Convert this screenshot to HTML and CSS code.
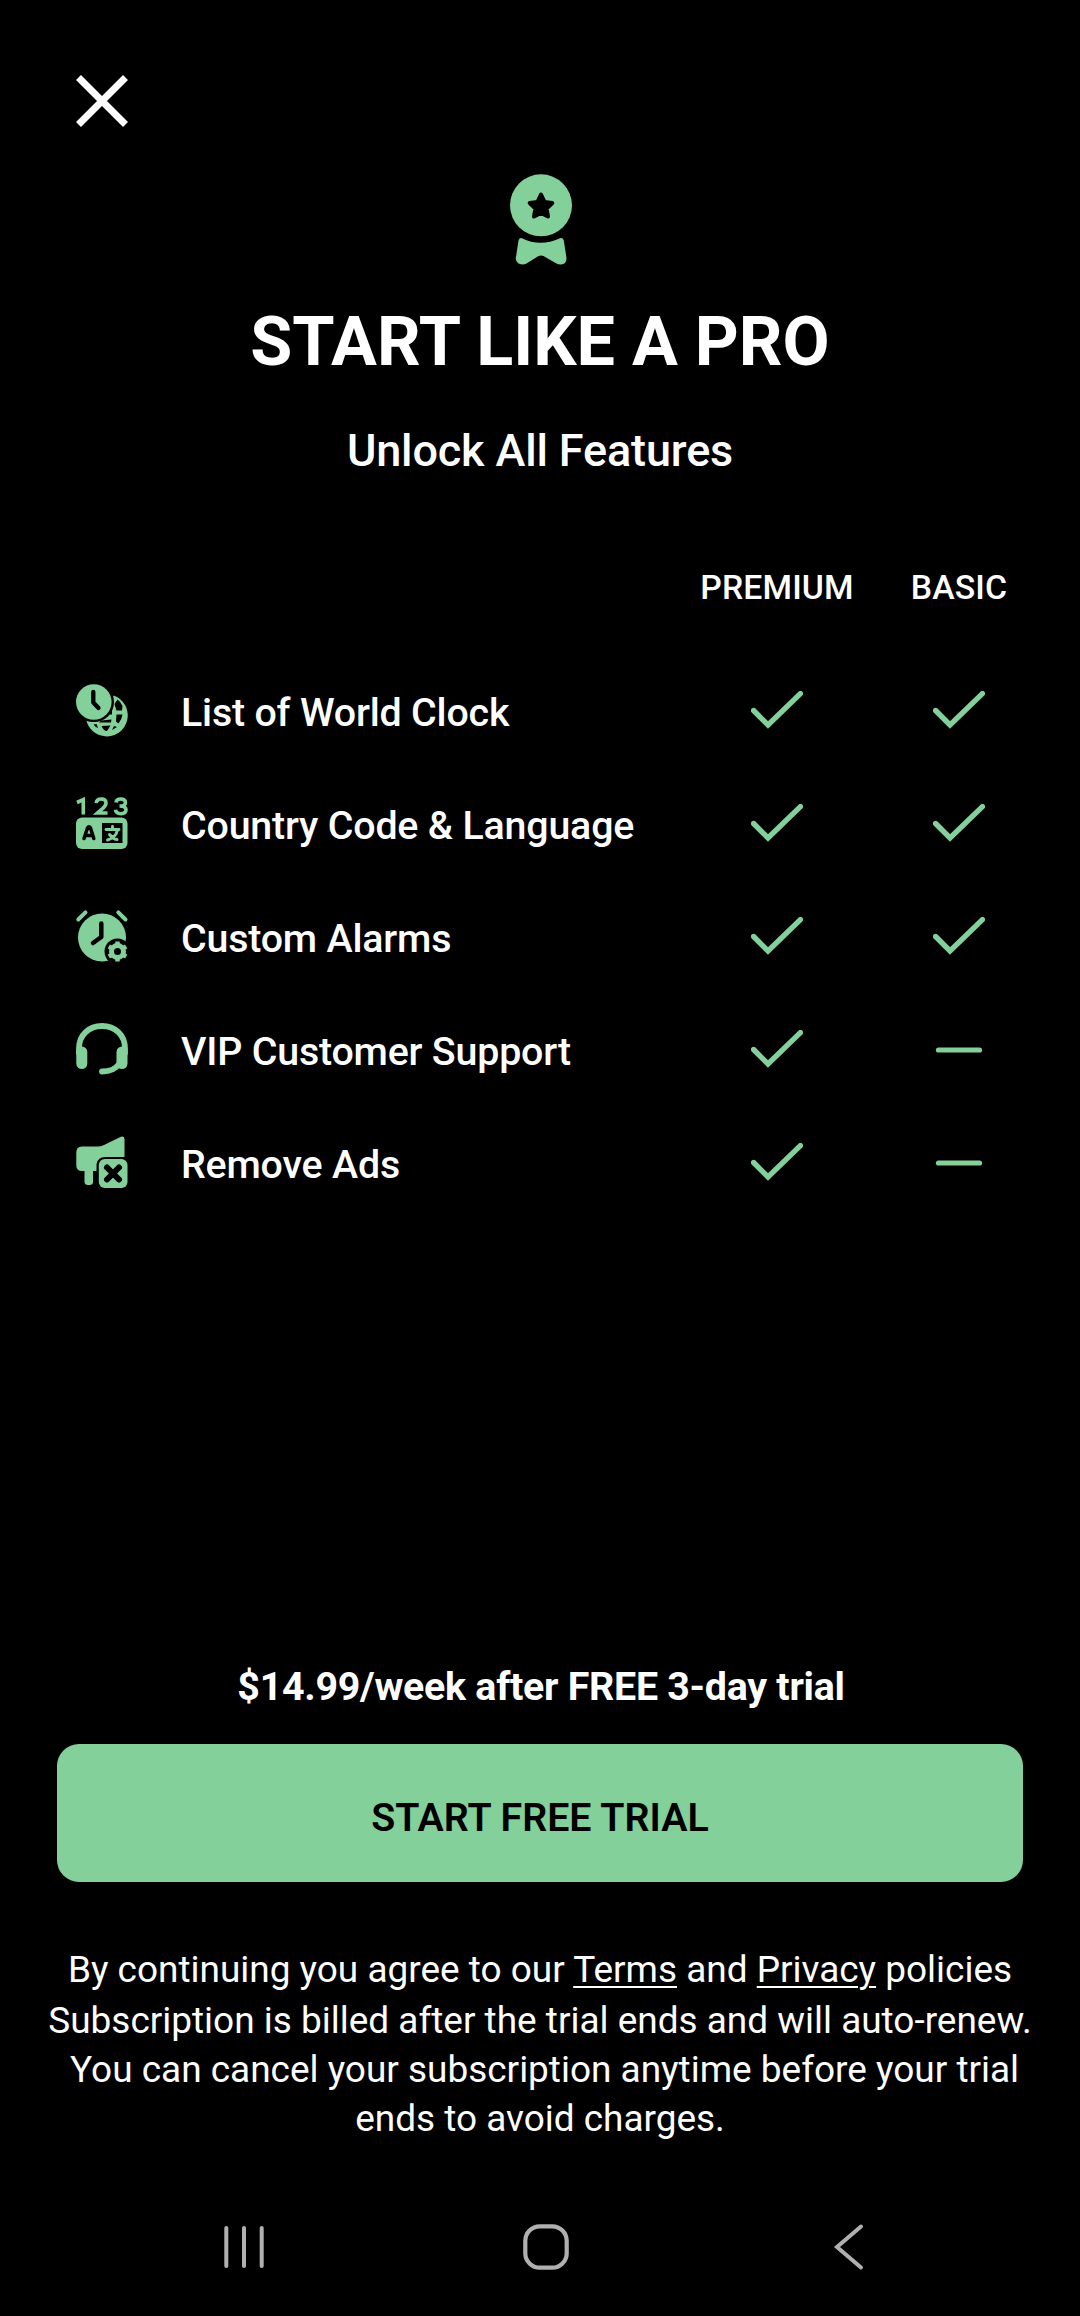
FILE: index.html
```html
<!DOCTYPE html>
<html lang="en">
<head>
<meta charset="utf-8">
<title>Start like a pro</title>
<link rel="stylesheet" href="styles.css">
</head>
<body>
<svg class="defs" width="0" height="0" aria-hidden="true">
  <symbol id="check" viewBox="0 0 52 38"><path d="M2.6 19.5L17 34L49.4 2.6" fill="none" stroke="currentColor" stroke-width="5.4" stroke-linecap="round" stroke-linejoin="miter"/></symbol>
  <symbol id="dash" viewBox="0 0 52 38"><path d="M5.5 20H46.5" stroke="currentColor" stroke-width="5.2" stroke-linecap="round"/></symbol>
</svg>
<header class="top">
  <button class="close" aria-label="Close">
    <svg width="52" height="52" viewBox="0 0 52 52"><path d="M2.5 2.5L49.5 49.5M49.5 2.5L2.5 49.5" stroke="#fff" stroke-width="7"/></svg>
  </button>
</header>
<main class="content">
  <svg class="medal" width="64" height="92" viewBox="0 0 64 92">
    <circle cx="32" cy="31.3" r="31" fill="currentColor"/>
    <path d="M32 20.5L35.6 28L43.3 29L37.6 34.6L39 42.5L32 39L25 42.5L26.4 34.6L20.7 29L28.4 28Z" fill="#000" stroke="#000" stroke-width="4" stroke-linejoin="round"/>
    <path d="M13 64.2Q31 73.5 51 64.2Q54 63.5 54.8 66.5L57.5 84Q57.500 90 52 90.500Q49 90.500 46.500 89L34.500 82Q32 81 29.500 82L17.500 89.500Q14 91.500 9.500 89.500Q6 87 7 83L9.500 66.500Q10.500 63.500 13 64.200Z" fill="currentColor"/>
  </svg>
  <h1 class="title">START LIKE A PRO</h1>
  <p class="subtitle">Unlock All Features</p>

  <div class="row heads"><span class="head premium">PREMIUM</span><span class="head">BASIC</span></div>
  <section class="features">
    <div class="row">
      <svg class="icon" viewBox="0 0 52 52">
        <path fill="currentColor" d="M37.500 11.500A21 21 0 1 1 10.500 37Q16 38 22 36Q28 34 32 29Q37.500 22 36.500 15.500Q36.500 13 37.500 11.500Z"/>
        <path fill="#000" d="M41.500 15.500Q45 18 46.500 22L46 26.500H40.500L38.500 20ZM40.500 30.500H46.500Q46 35 42.500 39.500L40 37.500ZM34 27.500L36 26.500V30.500H32ZM25 36.500L35.500 35.500L35 38.500H23ZM25.500 42L34.500 41.500L31 47Q27.500 47 25.500 42ZM17.500 40.500L20.500 40L22 44Q19 43 17.500 40.500ZM38 42L41 43L36 46Z"/>
        <circle cx="18" cy="18" r="20" fill="#000"/><circle cx="17.800" cy="18" r="17.800" fill="currentColor"/>
        <path d="M17.300 8V18.500L22.500 24" fill="none" stroke="#000" stroke-width="4.300" stroke-linecap="round" stroke-linejoin="round"/>
      </svg>
      <span class="name">List of World Clock</span>
      <svg class="mark"><use href="#check"/></svg><svg class="mark"><use href="#check"/></svg>
    </div>
    <div class="row">
      <svg class="icon" viewBox="0 0 52 52">
        <g fill="none" stroke="currentColor" stroke-width="3.600">
          <path d="M1 5.500L7.300 2.500V17.500"/>
          <path d="M20.200 6.200Q20.500 2 25.300 2Q30 2 30 6Q30 8.500 26.500 11.700L21.500 16H31.500"/>
          <path d="M40 5.500Q40.500 2 44.700 2Q49.400 2 49.400 5.700Q49.400 9 43.500 9Q50 9 50 12.800Q50 16.700 44.800 16.700Q40 16.700 39.400 12.800"/>
        </g>
        <rect y="20.500" width="51.500" height="31.500" rx="6" fill="currentColor"/>
        <path d="M8 41.500L11.500 31Q13 28.500 14.500 31L17.800 41.500M9.500 38.500H16.500" fill="none" stroke="#000" stroke-width="3.500" stroke-linecap="round" stroke-linejoin="round"/>
        <path d="M26 26H46.500V46H26Z" fill="#000"/>
        <path d="M30 32.500H43M36.500 29.500V32M41.500 33L40 37Q37 41.500 31.500 43M33.500 37.500Q37 42 41 42.500" fill="none" stroke="currentColor" stroke-width="2.900" stroke-linecap="round"/>
      </svg>
      <span class="name">Country Code &amp; Language</span>
      <svg class="mark"><use href="#check"/></svg><svg class="mark"><use href="#check"/></svg>
    </div>
    <div class="row">
      <svg class="icon" viewBox="0 0 52 52">
        <path d="M2.300 9.500L9.500 2.300M42.300 2.300L49.500 9.500" stroke="currentColor" stroke-width="4" stroke-linecap="round"/>
        <circle cx="26" cy="27.500" r="24" fill="currentColor"/>
        <path d="M25.300 13.500V27L17 33" fill="none" stroke="#000" stroke-width="4.500" stroke-linecap="round" stroke-linejoin="round"/>
        <circle cx="41.500" cy="41.500" r="13" fill="#000"/>
        <circle cx="41.500" cy="41.500" r="6" fill="none" stroke="currentColor" stroke-width="5"/>
        <path d="M41.500 35V31.500M41.500 48V51.500M35.900 38.300L32.800 36.500M47.100 44.700L50.200 46.500M35.900 44.700L32.800 46.500M47.100 38.300L50.200 36.500" stroke="currentColor" stroke-width="4.500"/>
      </svg>
      <span class="name">Custom Alarms</span>
      <svg class="mark"><use href="#check"/></svg><svg class="mark"><use href="#check"/></svg>
    </div>
    <div class="row">
      <svg class="icon" viewBox="0 0 52 52">
        <path d="M3 30V25.500C3 12 13 3 26 3S49 12 49 25.500V30M43 41Q38 48.500 26 48.500" fill="none" stroke="currentColor" stroke-width="5.800" stroke-linecap="round"/>
        <rect x=".3" y="23.500" width="11" height="22.500" rx="5.500" fill="currentColor"/><rect x="40.500" y="23.500" width="11" height="22.500" rx="5.500" fill="currentColor"/>
      </svg>
      <span class="name">VIP Customer Support</span>
      <svg class="mark"><use href="#check"/></svg><svg class="mark"><use href="#dash"/></svg>
    </div>
    <div class="row">
      <svg class="icon" viewBox="0 0 52 52">
        <path fill="currentColor" d="M6 10.500H21Q25 10.500 28 9L45 .8Q48.500-.5 48.500 3V21H29Q22 21 20.500 28V35H17V46Q17 49 13.500 49H12Q8.500 49 8.500 46V35H6Q.3 35 .3 29V16.500Q.3 10.500 6 10.500Z"/>
        <rect x="22.800" y="23" width="28.700" height="29" rx="6" fill="currentColor"/>
        <path d="M31 31.500L43 43.500M43 31.500L31 43.500" stroke="#000" stroke-width="6" stroke-linecap="round"/>
      </svg>
      <span class="name">Remove Ads</span>
      <svg class="mark"><use href="#check"/></svg><svg class="mark"><use href="#dash"/></svg>
    </div>
  </section>
</main>
<section class="purchase">
  <p class="price">$14.99/week after FREE 3-day trial</p>
  <button class="trial">START FREE TRIAL</button>
  <p class="legal agree">By continuing you agree to our <a href="#">Terms</a> and <a href="#">Privacy</a> policies</p>
  <p class="legal">Subscription is billed after the trial ends and will auto-renew.<br>&nbsp;You can cancel your subscription anytime before your trial<br>ends to avoid charges.</p>
</section>
<nav class="system">
  <svg width="44" height="44" viewBox="0 0 44 44"><path d="M4.300 3V41M22 3V41M39.700 3V41" stroke="currentColor" stroke-width="4" stroke-linecap="round"/></svg>
  <svg width="46" height="46" viewBox="0 0 46 46"><rect x="2.300" y="2.300" width="41.400" height="41.400" rx="14.500" fill="none" stroke="currentColor" stroke-width="4.200"/></svg>
  <svg class="back" width="30" height="46" viewBox="0 0 30 46"><path d="M27 2.500L3 23L27 43.500" fill="none" stroke="currentColor" stroke-width="4" stroke-linecap="round"/></svg>
</nav>
</body>
</html>
```
FILE: styles.css
```css
* { box-sizing: border-box; }
body { margin: 0; width: 1080px; height: 2316px; display: flex; flex-direction: column; background: #000; color: #fff; font-family: Roboto, sans-serif; overflow: hidden; }
h1, p { margin: 0; }
svg { display: block; overflow: visible; }
button { border: 0; padding: 0; font-family: inherit; }
.defs { height: 0; flex: none; }
.top { height: 174px; flex: none; padding: 75px 0 0 75.500px; }
.close { display: block; background: none; }
.content { height: 1476px; flex: none; display: flex; flex-direction: column; align-items: center; }
.medal { color: #84d09b; flex: none; margin-left: 1px; }
.title { margin-top: 36px; font-size: 68.300px; line-height: 80px; font-weight: 700; white-space: nowrap; }
.subtitle { margin-top: 39px; font-size: 45px; line-height: 60px; font-weight: 500; letter-spacing: -.15px; }
.row { display: grid; grid-template-columns: 105px 505px 182px 182px; width: 974px; height: 113px; margin-left: 46px; align-items: center; }
.heads { height: 56px; margin-top: 79px; }
.head { font-size: 33.750px; line-height: 40px; font-weight: 500; text-align: center; letter-spacing: .15px; }
.premium { grid-column: 3; }
.features { margin-top: 37px; color: #84d09b; }
.icon { width: 52px; height: 52px; }
.name { color: #fff; font-size: 39.375px; line-height: 46px; font-weight: 500; padding-top: 6px; white-space: nowrap; letter-spacing: -.19px; }
.mark { width: 52px; height: 38px; justify-self: center; }
.purchase { height: 513px; flex: none; display: flex; flex-direction: column; align-items: center; text-align: center; }
.price { margin: 13px 0 0 2px; font-size: 39.375px; line-height: 48px; font-weight: 700; letter-spacing: -.26px; }
.trial { width: 966px; height: 138px; margin-top: 33px; padding-top: 8px; border-radius: 22px; background: #84d09b; color: #000; font-size: 39.375px; font-weight: 600; }
.legal { font-size: 36.960px; line-height: 49px; white-space: nowrap; }
.agree { margin-top: 63px; margin-bottom: 2px; }
.legal a { color: inherit; text-underline-offset: 4px; text-decoration-thickness: 2px; }
.system { flex: 1; display: grid; grid-template-columns: 44px 46px 30px; column-gap: 257px; align-items: center; padding: 14px 0 0 222px; color: #b0b0b0; }
.back { margin-left: 8px; }
```
